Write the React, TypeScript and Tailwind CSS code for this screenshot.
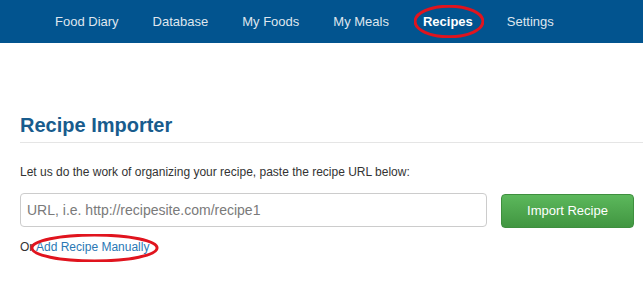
import React from "react";

const NAV = ["Food Diary", "Database", "My Foods", "My Meals", "Recipes", "Settings"];

function Ellipse({ className }: { className: string }) {
  return (
    <svg className={className} viewBox="0 0 100 40" preserveAspectRatio="none" fill="none">
      <ellipse cx="50" cy="20" rx="48.5" ry="18.5" stroke="#e0141e" strokeWidth="3" vectorEffect="non-scaling-stroke" />
    </svg>
  );
}

export default function App() {
  return (
    <div className="w-[643px] h-[297px] bg-white overflow-hidden" style={{ fontFamily: '"Liberation Sans", Arial, sans-serif' }}>
      <nav className="h-[43px] bg-[#02548f] flex items-center pl-[38px]">
        {NAV.map((n) => (
          <div key={n} className="relative px-[17px] text-[13px] leading-[15px]">
            {n === "Recipes" ? (
              <>
                <span className="font-bold text-white">{n}</span>
                <Ellipse className="absolute left-[8px] top-[-9px] w-[70px] h-[33px] pointer-events-none" />
              </>
            ) : (
              <span className="text-[#dfe6ee]">{n}</span>
            )}
          </div>
        ))}
      </nav>
      <main className="pl-[20px]">
        <h1 className="mt-[71px] text-[20px] leading-[22px] font-bold text-[#185c8d] pb-[6px] border-b border-[#e5e5e5]">
          Recipe Importer
        </h1>
        <p className="mt-[22px] text-[12px] leading-[15px] text-[#333]">
          Let us do the work of organizing your recipe, paste the recipe URL below:
        </p>
        <div className="mt-[13px] flex items-start gap-[14px]">
          <input
            type="text"
            placeholder="URL, i.e. http://recipesite.com/recipe1"
            className="w-[467px] h-[34px] border border-[#cccccc] rounded-[4px] pl-[6px] text-[14px] text-[#555] placeholder:text-[#7a7a7a] outline-none"
          />
          <button className="mt-[1px] w-[133px] h-[34px] rounded-[4px] border border-[#3e8f3e] bg-gradient-to-b from-[#5cb85c] to-[#419641] text-white text-[13px]">
            Import Recipe
          </button>
        </div>
        <div className="mt-[12px] text-[12px] leading-[15px] text-[#333]">
          Or{" "}
          <span className="relative">
            <a className="text-[#2a78b4]">Add Recipe Manually</a>
            <Ellipse className="absolute left-[-6px] top-[-6px] w-[129px] h-[28px] pointer-events-none" />
          </span>
        </div>
      </main>
    </div>
  );
}
